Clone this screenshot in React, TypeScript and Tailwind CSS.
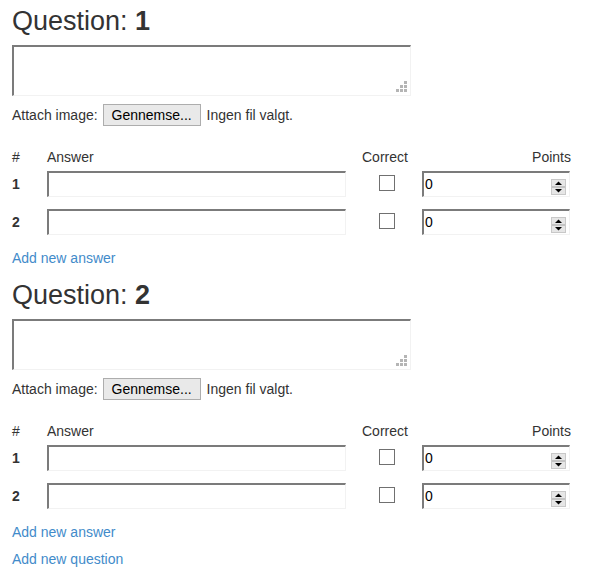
import React from "react";

function Spinner() {
  return (
    <svg width="15" height="16" viewBox="0 0 15 16" className="absolute right-[3px] top-[6px]">
      <rect x="0" y="0" width="15" height="16" fill="#e6e6e6" />
      <rect x="0.5" y="0.5" width="14" height="15" fill="none" stroke="#c8c8c8" />
      <line x1="1" y1="8" x2="14" y2="8" stroke="#a0a0a0" />
      <polygon points="4,6 11,6 7.5,2.5" fill="#000" />
      <polygon points="4,10 11,10 7.5,13.5" fill="#000" />
    </svg>
  );
}

function Grip() {
  const cells = [
    [10, 2],
    [6, 6],
    [10, 6],
    [2, 10],
    [6, 10],
    [10, 10],
  ];
  return (
    <svg width="14" height="14" className="absolute right-[2px] bottom-[2px]">
      {cells.map(([x, y], i) => (
        <rect key={i} x={x} y={y} width="3" height="3" fill="#b5b5b5" />
      ))}
    </svg>
  );
}

const inputCls =
  "h-[26px] border-t-2 border-l-2 border-r border-b border-t-[#7b7b7b] border-l-[#7b7b7b] border-r-[#f2f2f2] border-b-[#f2f2f2] bg-white";

function Row({ n }: { n: number }) {
  return (
    <div className="grid grid-cols-[35px_315px_60px_149px] items-start h-[38px]">
      <div className="font-bold pt-[3px]">{n}</div>
      <div className={inputCls + " w-[299px]"} />
      <div className="pl-[17px] pt-[4px]">
        <div className="w-[16px] h-[16px] border border-[#707070] bg-white" />
      </div>
      <div className={inputCls + " w-[148px] relative pl-[1px] text-black leading-[22px]"}>
        0
        <Spinner />
      </div>
    </div>
  );
}

function Question({ n, first }: { n: number; first?: boolean }) {
  return (
    <div>
      <h3 className={"text-[27px] leading-[30px] text-[#333] " + (first ? "mt-[6px]" : "mt-[12px]")}>
        Question: <b>{n}</b>
      </h3>
      <div className="mt-[9px] relative w-[399px] h-[51px] border-t-2 border-l-2 border-r border-b border-t-[#7b7b7b] border-l-[#7b7b7b] border-r-[#f2f2f2] border-b-[#f2f2f2] bg-white">
        <Grip />
      </div>
      <div className="flex items-center mt-[8px] h-[22px]">
        <span>Attach image:</span>
        <div className="ml-[5px] h-[22px] w-[98px] border border-[#adadad] bg-[#e9e9e9] flex items-center justify-center text-black">
          Gennemse...
        </div>
        <span className="ml-[6px]">Ingen fil valgt.</span>
      </div>
      <div className="grid grid-cols-[35px_315px_60px_149px] mt-[21px] h-[24px]">
        <div>#</div>
        <div>Answer</div>
        <div>Correct</div>
        <div className="text-right">Points</div>
      </div>
      <Row n={1} />
      <Row n={2} />
      <div className="text-[#428bca] mt-[1px] leading-[20px]">Add new answer</div>
    </div>
  );
}

export default function App() {
  return (
    <div
      className="w-[612px] h-[576px] bg-white text-[14px] text-[#333] px-[12px] overflow-hidden"
      style={{ fontFamily: '"Liberation Sans", Arial, sans-serif' }}
    >
      <Question n={1} first />
      <Question n={2} />
      <div className="text-[#428bca] mt-[7px] leading-[20px]">Add new question</div>
    </div>
  );
}
